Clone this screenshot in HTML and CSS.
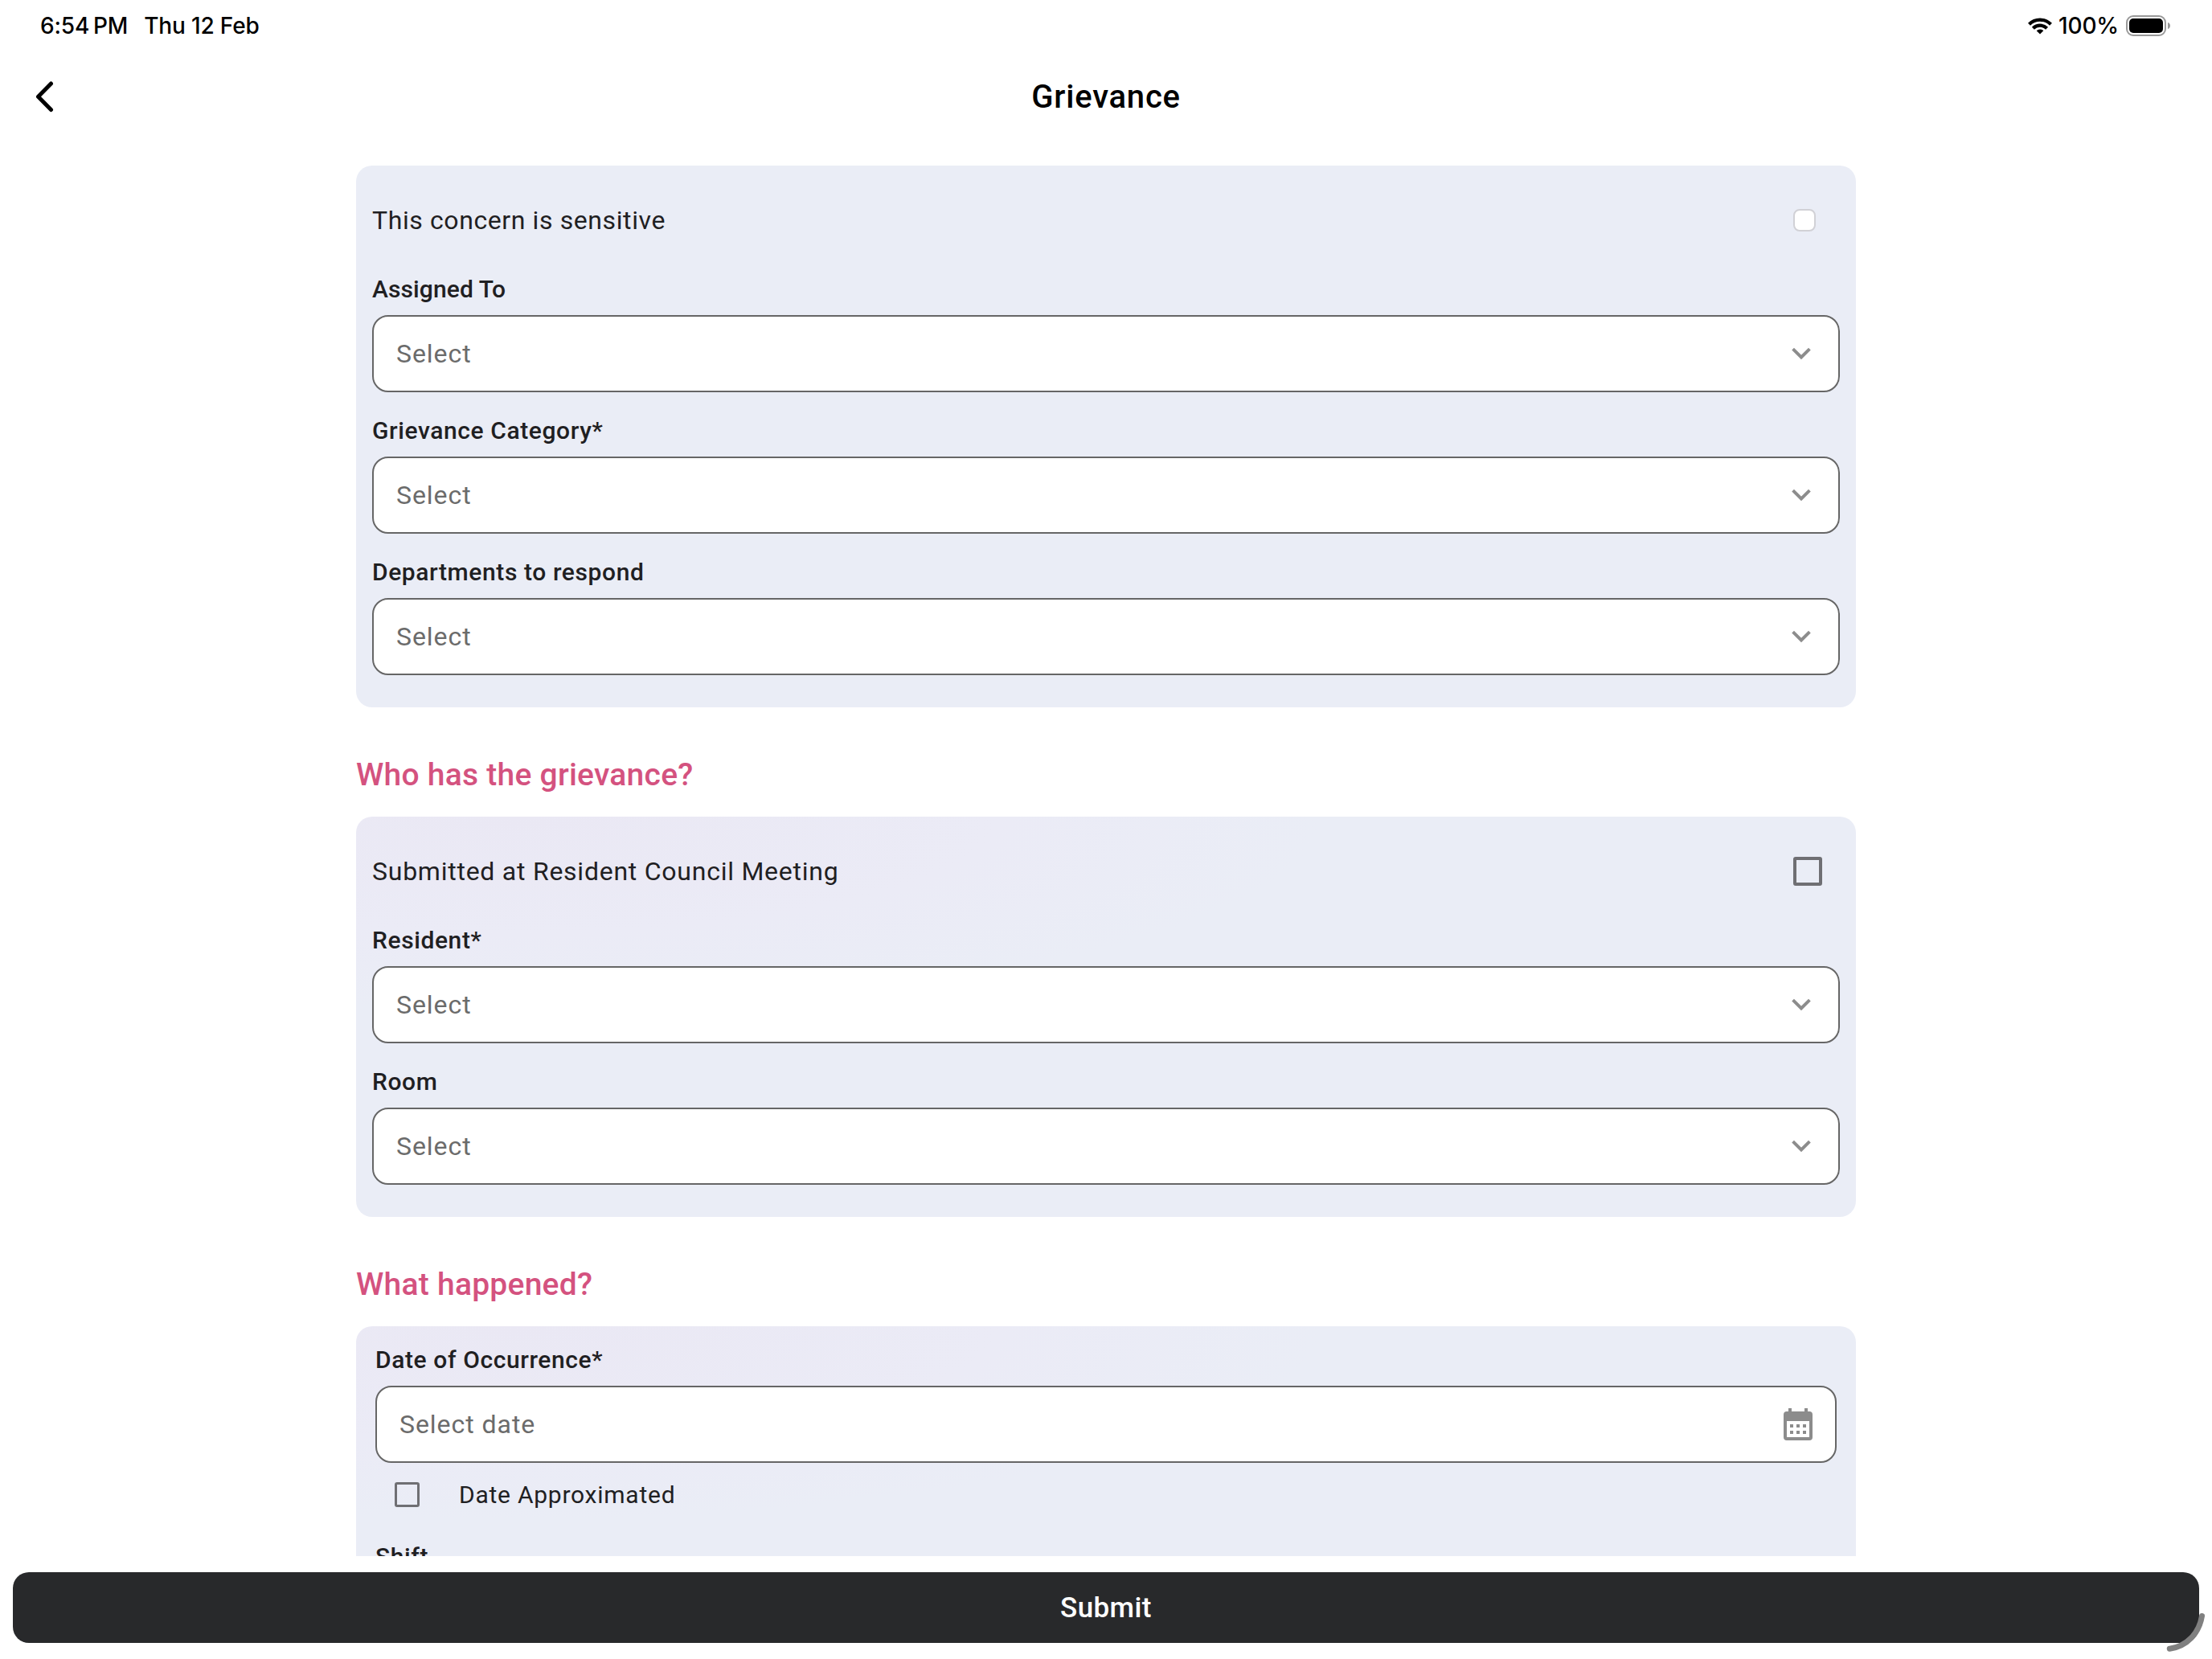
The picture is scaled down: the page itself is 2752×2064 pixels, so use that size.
FILE: index.html
```html
<!DOCTYPE html>
<html lang="en">
<head>
  <meta charset="UTF-8">
  <meta name="viewport" content="width=device-width, initial-scale=1.0">
  <title>Grievance</title>
  <link rel="stylesheet" href="styles.css">
</head>
<body>
  <svg class="sprite" width="0" height="0">
    <symbol id="chevron" viewBox="0 0 24 16">
      <path d="M1.6 2.1 12 12.5 22.4 2.1" fill="none" stroke="#8c8c8c" stroke-width="3.9"/>
    </symbol>
  </svg>

  <div class="status-bar">
    <span class="time">6:54&#8201;PM</span>
    <span class="date">Thu 12 Feb</span>
    <div class="status-right">
      <svg width="30" height="21" viewBox="0 0 30 21">
        <g fill="none" stroke="#000" stroke-width="4.2">
          <path d="M1.5 8.2a19.2 19.2 0 0 1 27 0"/>
          <path d="M6.4 13.2a12.2 12.2 0 0 1 17.2 0"/>
        </g>
        <path d="M15 20.6l-4.3-4.3a6.1 6.1 0 0 1 8.6 0z"/>
      </svg>
      <span class="percent">100%</span>
      <svg width="56" height="26" viewBox="0 0 56 26">
        <rect x="1" y="1" width="48" height="24" rx="8" fill="none" stroke="#999" stroke-width="2"/>
        <rect x="4" y="4" width="42" height="18" rx="5"/>
        <path d="M52 9c4 1 4 7 0 8z" fill="#999"/>
      </svg>
    </div>
  </div>

  <header class="nav-bar">
    <svg class="back" width="24" height="40" viewBox="0 0 24 40">
      <path d="M19.5 4 3.5 20.2 19.5 36.5" fill="none" stroke="#000" stroke-width="5" stroke-linecap="round" stroke-linejoin="round"/>
    </svg>
    <h1>Grievance</h1>
  </header>

  <main class="content">
    <section class="card">
      <div class="check-row">
        <span class="sensitive">This concern is sensitive</span>
        <span class="checkbox rounded"></span>
      </div>
      <div class="field">
        <label class="tight">Assigned To</label>
        <div class="select"><span>Select</span><svg class="chevron"><use href="#chevron"/></svg></div>
      </div>
      <div class="field">
        <label>Grievance Category*</label>
        <div class="select"><span>Select</span><svg class="chevron"><use href="#chevron"/></svg></div>
      </div>
      <div class="field">
        <label>Departments to respond</label>
        <div class="select"><span>Select</span><svg class="chevron"><use href="#chevron"/></svg></div>
      </div>
    </section>

    <h2>Who has the grievance?</h2>
    <section class="card tinted">
      <div class="check-row">
        <span>Submitted at Resident Council Meeting</span>
        <span class="checkbox"></span>
      </div>
      <div class="field">
        <label>Resident*</label>
        <div class="select"><span>Select</span><svg class="chevron"><use href="#chevron"/></svg></div>
      </div>
      <div class="field">
        <label>Room</label>
        <div class="select"><span>Select</span><svg class="chevron"><use href="#chevron"/></svg></div>
      </div>
    </section>

    <h2>What happened?</h2>
    <section class="card tinted occurrence">
      <div class="field">
        <label>Date of Occurrence*</label>
        <div class="select">
          <span>Select date</span>
          <svg class="calendar" width="36" height="40" viewBox="0 0 36 40" fill="#8c8c8c">
            <path d="M6 0h4v4h16V0h4v4h2a4 4 0 0 1 4 4v28a4 4 0 0 1-4 4H4a4 4 0 0 1-4-4V8a4 4 0 0 1 4-4h2zM4 16v20h28V16z" fill-rule="evenodd"/>
            <path d="M8 20h4v4H8zM16 20h4v4h-4zM24 20h4v4h-4zM8 28h4v4H8zM16 28h4v4h-4zM24 28h4v4h-4z"/>
          </svg>
        </div>
      </div>
      <div class="approx-row">
        <span class="checkbox small"></span>
        <span>Date Approximated</span>
      </div>
      <div class="field">
        <label>Shift</label>
      </div>
    </section>
  </main>

  <footer class="bottom-bar">
    <button class="submit" type="button">Submit</button>
    <!-- window resize handle -->
    <svg class="resize-handle" width="56" height="56" viewBox="0 0 56 56">
      <path d="M47.5 8.5C44 30 29 46 7.3 49.3" fill="none" stroke="#808080" stroke-width="7" stroke-linecap="round"/>
    </svg>
  </footer>
</body>
</html>
```
FILE: styles.css
```css
* {
  box-sizing: border-box;
}

body {
  margin: 0;
  height: 100vh;
  display: flex;
  flex-direction: column;
  overflow: hidden;
  background: #fff;
  color: #1f2022;
  font-family: Roboto, "Liberation Sans", sans-serif;
  font-size: 32px;
}

.sprite {
  position: absolute;
}

/* Status bar */
.status-bar {
  display: flex;
  align-items: center;
  height: 64px;
  padding: 0 51px 0 50px;
  font-family: Inter, "Liberation Sans", sans-serif;
  font-size: 28px;
  font-weight: 500;
  line-height: 65px;
  letter-spacing: -0.15px;
  color: #000;
}

.date {
  margin-left: 20px;
}

.status-right {
  display: flex;
  align-items: center;
  gap: 8px;
  margin-left: auto;
}

.percent {
  margin-right: 1px;
}

/* Header */
.nav-bar {
  display: flex;
  align-items: center;
  height: 112px;
  margin-bottom: 30px;
  padding: 0 44px;
}

h1 {
  flex: 1;
  margin: 0 24px 0 0;
  text-align: center;
  font-size: 40px;
  font-weight: 500;
  letter-spacing: 0.8px;
  color: #000;
}

/* Form */
.content {
  flex: 1;
  min-height: 0;
  width: 1866px;
  margin: 0 auto;
  overflow: hidden;
}

h2 {
  height: 136px;
  margin: 0;
  padding-top: 31px;
  line-height: 106px;
  font-size: 39px;
  font-weight: 500;
  letter-spacing: 0.25px;
  color: #d4527f;
}

.card {
  padding: 0 20px 10px;
  border-radius: 20px;
  background: #eaedf6;
}

.tinted {
  background: radial-gradient(ellipse 1000px 240px at 200px 0, #eae8f4, #ebebf6 60%, #eaedf6);
}

.check-row {
  display: flex;
  align-items: center;
  justify-content: space-between;
  height: 136px;
  padding-right: 22px;
  letter-spacing: 0.75px;
}

.sensitive {
  letter-spacing: 0.6px;
}

.checkbox {
  width: 36px;
  height: 36px;
  border: 4px solid #6f6f73;
  border-radius: 3px;
}

.checkbox.rounded {
  width: 28px;
  height: 28px;
  margin-right: 8px;
  border: 2px solid #d1d1d6;
  border-radius: 8px;
  background: #fff;
}

.checkbox.small {
  width: 31px;
  height: 31px;
  border-width: 3px;
}

.field {
  margin-bottom: 30px;
}

label {
  display: block;
  height: 36px;
  margin-bottom: 14px;
  line-height: 36px;
  font-size: 30px;
  font-weight: 500;
  letter-spacing: 0.6px;
}

label.tight {
  letter-spacing: 0.1px;
}

.select {
  display: flex;
  align-items: center;
  justify-content: space-between;
  height: 96px;
  padding: 0 34px 0 28px;
  border: 2px solid #666;
  border-radius: 20px;
  background: #fff;
  color: #6b6b6b;
  letter-spacing: 0.95px;
}

.chevron {
  width: 24px;
  height: 16px;
}

.occurrence {
  padding: 24px 24px 10px;
}

.occurrence .field {
  margin-bottom: 0;
}

.occurrence .select {
  padding-right: 28px;
}

.approx-row {
  display: flex;
  align-items: center;
  gap: 49px;
  height: 79px;
  margin-bottom: 20px;
  padding-left: 24px;
  font-size: 30px;
  letter-spacing: 0.75px;
}

/* Submit */
.bottom-bar {
  position: relative;
  padding: 20px 16px;
}

.submit {
  display: block;
  width: 100%;
  height: 88px;
  padding: 1px 0 0;
  border: 0;
  border-radius: 20px;
  background: #28292b;
  color: #fff;
  font-family: inherit;
  font-size: 35px;
  font-weight: 500;
  letter-spacing: 0.4px;
}

.resize-handle {
  position: absolute;
  right: 4px;
  bottom: 6px;
}
```
